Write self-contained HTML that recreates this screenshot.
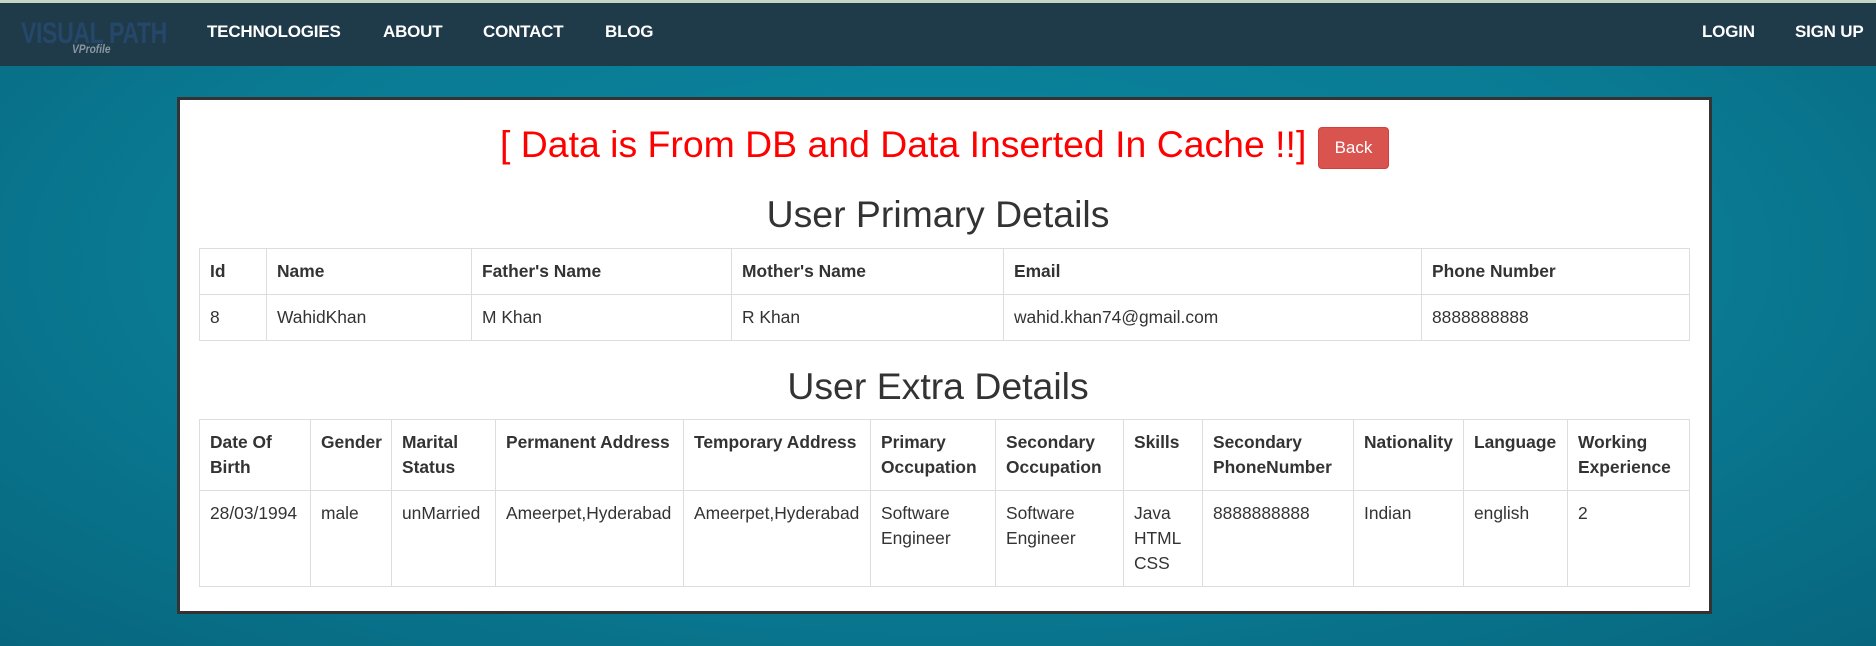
<!DOCTYPE html>
<html><head><meta charset="utf-8"><style>
*{box-sizing:border-box;margin:0;padding:0}
body{width:1876px;height:646px;overflow:hidden;font-family:"Liberation Sans",Arial,sans-serif;background:radial-gradient(ellipse at 50% 40%,#0b859f 0%,#0a7b94 55%,#07667e 100%);position:relative}
.top{position:absolute;left:0;top:0;width:1876px;height:3px;background:#c6d6c4}
.nav{position:absolute;left:0;top:3px;width:1876px;height:63px;background:#1f3a48}
.nav a{position:absolute;top:19px;color:#fff;font-weight:bold;font-size:17px;text-decoration:none;letter-spacing:-0.2px}
.logo{position:absolute;left:21px;top:14px;font-size:30px;font-weight:bold;color:#24476a;transform:scaleX(0.77);transform-origin:left top;letter-spacing:-0.5px;white-space:nowrap}
.vp{position:absolute;left:72px;top:39px;font-size:12px;font-style:italic;font-weight:bold;color:#8797a3;transform:scaleX(0.85);transform-origin:left top}
.box{position:absolute;left:177px;top:97px;width:1535px;height:517px;background:#fff;border:3px solid #333}
.title{position:absolute;left:0;width:100%;text-align:center;color:#333;font-size:37.4px;line-height:40px}
.red{position:absolute;left:500px;top:124px;color:#f00;font-size:37.4px;line-height:40px;white-space:nowrap}
.btn{position:absolute;left:1318px;top:127px;width:71px;height:42px;background:#d9534f;border:1px solid #d43f3a;border-radius:4px;color:#fff;font-size:17px;line-height:40px;text-align:center}
table{position:absolute;border-collapse:collapse;table-layout:fixed;font-size:17.4px;line-height:25px;color:#333}
td,th{border:1px solid #ddd;padding:10px 9px 10px 10px;text-align:left;vertical-align:top}
th{font-weight:bold}
</style></head><body>
<div class="top"></div>
<div class="nav">
<div class="logo">VISUAL PATH</div><div class="vp">VProfile</div>
<a style="left:207px">TECHNOLOGIES</a><a style="left:383px">ABOUT</a><a style="left:483px">CONTACT</a><a style="left:605px">BLOG</a>
<a style="left:1702px">LOGIN</a><a style="left:1795px">SIGN UP</a>
</div>
<div class="box"></div>
<div class="red">[ Data is From DB and Data Inserted In Cache !!]</div>
<div class="btn">Back</div>
<div class="title" style="top:194px">User Primary Details</div>
<table style="left:199px;top:248px;width:1490px">
<colgroup><col style="width:67px"><col style="width:205px"><col style="width:260px"><col style="width:272px"><col style="width:418px"><col style="width:268px"></colgroup>
<tr><th>Id</th><th>Name</th><th>Father's Name</th><th>Mother's Name</th><th>Email</th><th>Phone Number</th></tr>
<tr><td>8</td><td>WahidKhan</td><td>M Khan</td><td>R Khan</td><td>wahid.khan74@gmail.com</td><td>8888888888</td></tr>
</table>
<div class="title" style="top:366px">User Extra Details</div>
<table style="left:199px;top:419px;width:1490px">
<colgroup><col style="width:111px"><col style="width:81px"><col style="width:104px"><col style="width:188px"><col style="width:187px"><col style="width:125px"><col style="width:128px"><col style="width:79px"><col style="width:151px"><col style="width:110px"><col style="width:104px"><col style="width:122px"></colgroup>
<tr><th>Date Of Birth</th><th>Gender</th><th>Marital Status</th><th>Permanent Address</th><th>Temporary Address</th><th>Primary Occupation</th><th>Secondary Occupation</th><th>Skills</th><th>Secondary PhoneNumber</th><th>Nationality</th><th>Language</th><th>Working Experience</th></tr>
<tr><td>28/03/1994</td><td>male</td><td>unMarried</td><td>Ameerpet,Hyderabad</td><td>Ameerpet,Hyderabad</td><td>Software Engineer</td><td>Software Engineer</td><td>Java<br>HTML<br>CSS</td><td>8888888888</td><td>Indian</td><td>english</td><td>2</td></tr>
</table>
</body></html>
